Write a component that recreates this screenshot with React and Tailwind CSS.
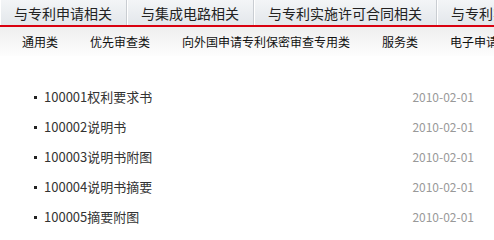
const tabs = ["与专利申请相关", "与集成电路相关", "与专利实施许可合同相关", "与专利实施许可合同相关"];
const subs = ["通用类", "优先审查类", "向外国申请专利保密审查专用类", "服务类", "电子申请类"];
const docs = [
  "100001权利要求书",
  "100002说明书",
  "100003说明书附图",
  "100004说明书摘要",
  "100005摘要附图",
];

const App = () => {
  return (
    <div
      className="w-[494px] h-[238px] overflow-hidden bg-white"
      style={{ fontFamily: '"Noto Sans CJK SC", "Liberation Sans", sans-serif' }}
    >
      {/* top tabs */}
      <div className="flex h-[25px] whitespace-nowrap bg-gradient-to-b from-[#f3f5f7] to-[#e3e7eb]">
        {tabs.map((t, i) => (
          <div
            key={i}
            className="shrink-0 px-[14px] h-full flex items-center text-[14px] leading-none text-[#222] border-r border-[#c9cdd2] shadow-[inset_1px_0_0_#ffffff]"
          >
            {t}
          </div>
        ))}
      </div>
      <div className="h-[2px] bg-[#d9000f]" />

      {/* sub nav */}
      <div className="flex h-[29px] pl-[6px] items-center whitespace-nowrap bg-gradient-to-b from-[#efefef] to-[#fdfdfd]">
        {subs.map((s) => (
          <div key={s} className="shrink-0 px-4 text-[12px] leading-none text-[#111]">
            {s}
          </div>
        ))}
      </div>

      {/* list */}
      <ul className="pt-[26px] pl-[34px] pr-[20px]">
        {docs.map((d) => (
          <li key={d} className="flex items-center h-[30px]">
            <span className="w-[3px] h-[3px] bg-[#222] mr-[7px]" />
            <span className="flex-1 text-[13px] text-[#333]">{d}</span>
            <span className="text-[12px] text-[#999]">2010-02-01</span>
          </li>
        ))}
      </ul>
    </div>
  );
};

export default App;
